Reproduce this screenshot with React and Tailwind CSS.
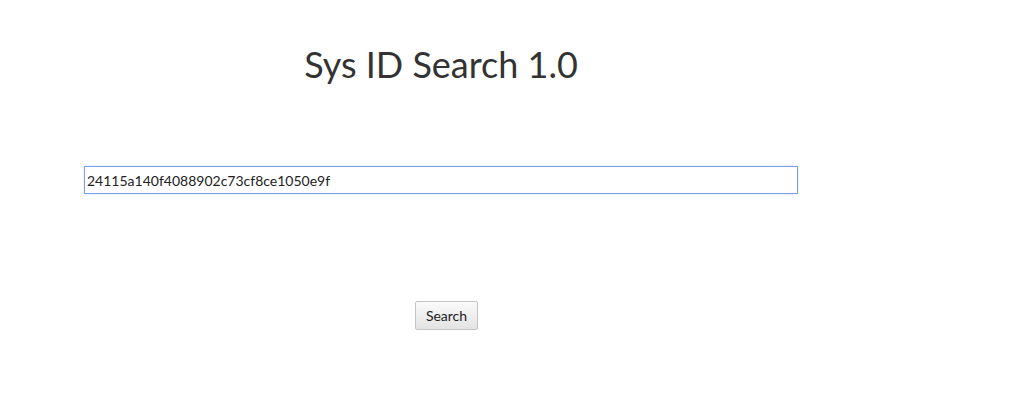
export default function App() {
  return (
    <div className="min-h-[395px] bg-white font-['Lato','Open_Sans',sans-serif] text-[#333]">
      <div className="ml-[84px] flex w-[714px] flex-col items-center">
        <h1 className="mt-[40px] text-[36px] leading-[48px] text-[#333]">Sys ID Search 1.0</h1>
        <input
          type="text"
          defaultValue="24115a140f4088902c73cf8ce1050e9f"
          className="mt-[78px] h-[28px] w-[714px] border border-[#7b9fe3] px-[2px] text-[14px] text-[#222] shadow-[0_0_1px_#9bb6ec] outline-none"
        />
        <button
          type="button"
          className="mt-[107px] ml-[11px] h-[29px] w-[63px] rounded-[2px] border border-[#c4c4c4] bg-gradient-to-b from-[#fafafa] to-[#e3e3e3] text-[14px] text-[#222]"
        >
          Search
        </button>
      </div>
    </div>
  );
}
